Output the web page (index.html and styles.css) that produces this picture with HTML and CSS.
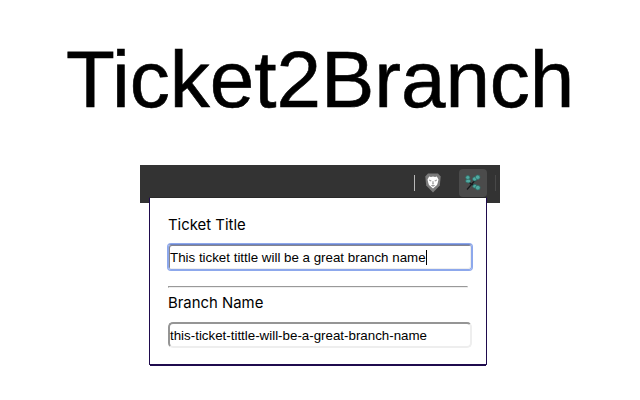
FILE: index.html
```html
<!DOCTYPE html>
<html lang="en">
<head>
<meta charset="utf-8">
<title>Ticket2Branch</title>
<link rel="stylesheet" href="styles.css">
</head>
<body>
<h1 class="title">Ticket2Branch</h1>
<main class="browser">
  <div class="toolbar">
    <span class="divider"></span>
    <svg class="shield" width="16" height="20" viewBox="0 0 16 20">
      <path d="M3 .5h10l2.700 3-.9 9L8 19.500 1.200 12.500.3 3.500z" fill="#7b7b7b"/>
      <path d="M4.200 3.500l1.800.5 2-.5 2 .5 1.800-.5 1.700 3-.8 3.500-.7 2L8 15.500 4 12l-.7-2-.8-3.500z" fill="#fff"/>
      <path d="M4 6.500l2.500 1-.5 1-1.700-.8zM12 6.500l-2.500 1 .5 1 1.700-.8zM7.600 8h.8l.4 3H7.200zM5.800 12.500L8 11.500l2.200 1L8 13.800z" fill="#999"/>
    </svg>
    <span class="extension">
      <svg width="18" height="18" viewBox="0 0 18 18">
        <path d="M3 15.500l7-8 3-2M7.500 10.500L4 7M7.500 10.500l4 .5" fill="none" stroke="#171b1d" stroke-width="1.200"/>
        <g fill="#51aaa1" stroke="#2d6f68" stroke-width=".7">
          <ellipse cx="3.800" cy="3.500" rx="2.100" ry="1.900"/>
          <ellipse cx="4.200" cy="7.100" rx="2.600" ry="1.800"/>
          <ellipse cx="10.700" cy="5" rx="2.200" ry="2.100"/>
          <ellipse cx="13.700" cy="3.200" rx="2.300" ry="2.200"/>
          <ellipse cx="10.800" cy="12.200" rx="2" ry="1.900"/>
          <ellipse cx="13.800" cy="13.700" rx="2.400" ry="2.300"/>
        </g>
      </svg>
    </span>
    <span class="divider faint"></span>
  </div>
  <section class="popup">
    <label class="label">Ticket Title</label>
    <div class="field focused">This ticket tittle will be a great branch name<span class="caret"></span></div>
    <hr class="rule">
    <label class="label">Branch Name</label>
    <div class="field">this-ticket-tittle-will-be-a-great-branch-name</div>
  </section>
</main>
</body>
</html>
```
FILE: styles.css
```css
* { box-sizing: border-box; }
body {
  margin: 0;
  height: 400px;
  overflow: hidden;
  background: #fff;
  color: #000;
  font-family: "Liberation Sans", Arial, sans-serif;
}
.title {
  margin: 0;
  padding: 40px 0 0 66px;
  font-size: 80px;
  font-weight: 400;
  line-height: 80px;
  white-space: nowrap;
  -webkit-text-stroke: .6px #000;
}
.browser {
  width: 360px;
  margin: 45px 0 0 140px;
}
.toolbar {
  display: flex;
  align-items: flex-start;
  justify-content: flex-end;
  height: 38px;
  padding: 4px 4px 0 0;
  background: #333;
}
.divider {
  width: 1px;
  height: 16px;
  margin: 6px 10px 0 0;
  background: #b8b8b8;
}
.faint {
  margin: 6px 0 0 8px;
  background: #484848;
}
.shield { margin: 4px 18px 0 0; }
.extension {
  display: flex;
  align-items: center;
  justify-content: center;
  width: 28px;
  height: 28px;
  border-radius: 4px;
  background: #4b4b4b;
}
.popup {
  position: relative;
  width: 338px;
  height: 168px;
  margin: -6px 0 0 9px;
  padding: 18px 0 0 18px;
  border: 1px solid #1f0b4d;
  border-top-color: #292929;
  border-radius: 1px;
  background: #fff;
  box-shadow: 0 2px 0 -1px #1f0b4d;
}
.label {
  display: block;
  height: 18px;
  font-family: Inter, sans-serif;
  font-size: 14.900px;
  line-height: 18px;
}
.field {
  display: flex;
  align-items: center;
  width: 304px;
  height: 26px;
  margin: 10px 0 0;
  padding: 1px 0 0;
  border: 2px solid;
  border-color: #959595 #eee #eee #959595;
  border-radius: 5px;
  font-size: 13.333px;
  line-height: 16px;
  white-space: pre;
}
.focused {
  padding: 2px 1px 1px;
  border: 1px solid #8da8ec;
  border-top-color: #6d83c4;
  border-radius: 3px;
  box-shadow: 0 0 0 1px #8da8ec, inset 1px 1px 0 #85858d, inset -1px -1px 0 #eee;
}
.caret {
  width: 1px;
  height: 15px;
  background: #000;
}
.rule {
  width: 300px;
  height: 2px;
  margin: 16px 0 6px;
  border: 1px solid;
  border-color: #999 #eee #eee #999;
}
```
